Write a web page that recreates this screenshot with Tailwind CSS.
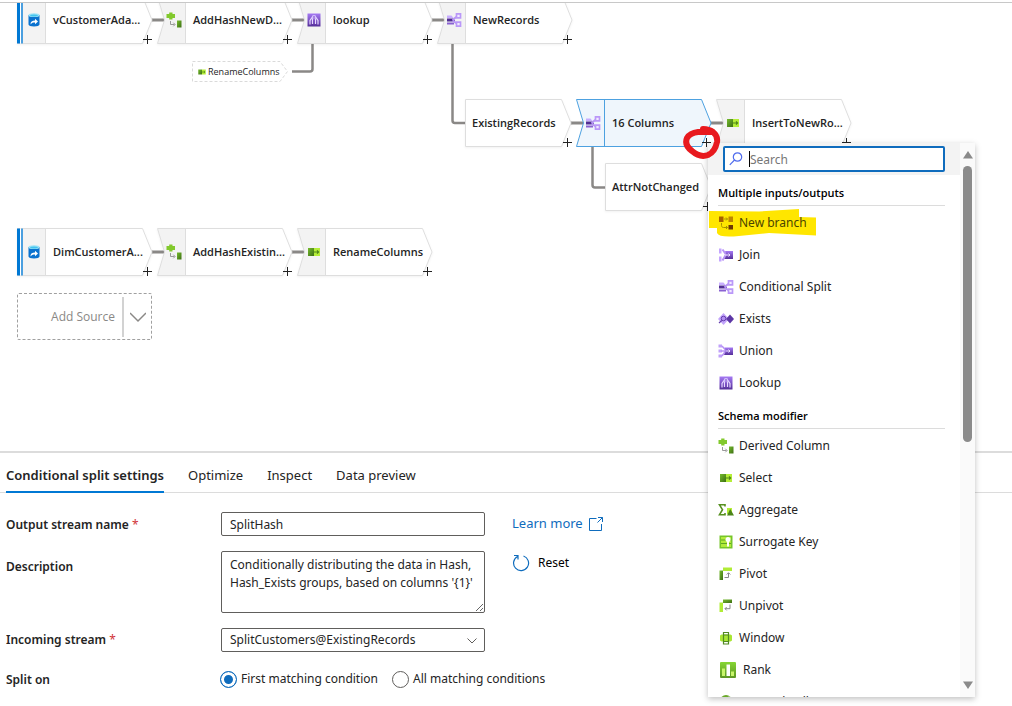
<!DOCTYPE html>
<html lang="en">
<head>
<meta charset="utf-8">
<meta name="viewport" content="width=device-width, initial-scale=1">
<title>Data flow</title>
<script src="https://cdn.jsdelivr.net/npm/@tailwindcss/browser@4"></script>
</head>
<body class="relative flex min-h-screen flex-col bg-white font-['Noto_Sans','Open_Sans',sans-serif] text-xs text-[#242424]">

<!-- Shared shapes and icons -->
<svg class="absolute size-0" aria-hidden="true">
  <defs>
    <linearGradient id="gp" x1="0" y1="0" x2="0" y2="1"><stop offset="0" stop-color="#a67af4"/><stop offset="1" stop-color="#552f99"/></linearGradient>
    <linearGradient id="gg" x1="0" y1="0" x2="1" y2="1"><stop offset="0" stop-color="#76bc2d"/><stop offset="1" stop-color="#3c6e14"/></linearGradient>
    <linearGradient id="gl" x1="0" y1="0" x2="0" y2="1"><stop offset="0" stop-color="#86d633"/><stop offset="1" stop-color="#5e9624"/></linearGradient>
    <symbol id="shape" viewBox="0 0 140 48">
      <path d="M.5 .5H125.500L135 24L125.500 47.500H.5L7.500 24Z" fill="#fff"/>
      <path d="M.5 .5H28.500V47.500H.5L7.500 24Z" fill="#f3f3f3"/>
      <path d="M.5 .5H125.500L135 24L125.500 47.500H.5L7.500 24ZM28.500 .5V47.500" fill="none" stroke="#dedede"/>
    </symbol>
    <symbol id="shape-source" viewBox="0 0 140 48">
      <path d="M.5 .5H125.500L135 24L125.500 47.500H.5Z" fill="#fff"/>
      <path d="M.5 .5H28.500V47.500H.5Z" fill="#f3f3f3"/>
      <path d="M.5 .5H125.500L135 24L125.500 47.500H.5M28.500 .5V47.500" fill="none" stroke="#dedede"/>
      <path d="M0 .5H3V47.500H0Z" fill="#0078d4"/><path d="M3 .5H4V47.500H3Z" fill="#fff"/><path d="M4 .5H6V47.500H4Z" fill="#4a9fe0"/>
    </symbol>
    <symbol id="shape-branch" viewBox="0 0 112 48">
      <path d="M.5 .5H96.500L106 24L96.500 47.500H.5Z" fill="#fff" stroke="#dedede"/>
    </symbol>
    <symbol id="shape-active" viewBox="0 0 140 48">
      <path d="M.5 .5H125.500L135 24L125.500 47.500H.5L7.500 24ZM28.500 .5V47.500" fill="#eff6fc" stroke="#4da1e0"/>
    </symbol>

    <symbol id="i-source" viewBox="0 0 16 16">
      <path d="M2.500 3v9.500c0 1.200 2.400 2 5.500 2s5.500-.8 5.500-2V3z" fill="#0a72cf"/>
      <ellipse cx="8" cy="3.200" rx="5.500" ry="1.900" fill="#9be3f7"/><ellipse cx="8" cy="3.400" rx="3.800" ry="1" fill="#45c4ee"/>
      <path d="M4.500 12.500C4.500 9.500 6 8.500 9 8.500V6.800l3 2.700-3 2.800v-1.700c-2 0-3.200.3-4.500 1.900z" fill="#fff"/>
    </symbol>
    <symbol id="i-derived" viewBox="0 0 16 16">
      <path d="M3.200 0.500h3.300v1.500h2.500v4H6.500v1.500H3.200V6H.5V2h2.700z" fill="#82c92d"/>
      <path d="M11 8.500H15.500v7h-4.500z" fill="url(#gg)"/>
      <path d="M4.500 9v3.500h4M7.300 10.700l1.800 1.800-1.800 1.800" fill="none" stroke="#999"/>
    </symbol>
    <symbol id="i-select" viewBox="0 0 16 16">
      <path d="M2 4h6v8H2z" fill="url(#gg)"/><path d="M8 4h6v8H8z" fill="#b5ee38"/>
      <path d="M7.500 8h5M11 6.300l1.700 1.700-1.700 1.700" fill="none" stroke="#4d8419" stroke-width="1.100"/>
    </symbol>
    <symbol id="i-lookup" viewBox="0 0 16 16">
      <path d="M1.500 1.500h13v13h-13z" fill="url(#gp)"/>
      <path d="M4 12.500V8.500L6 5.500M12 12.500V8.500L10 5.500M6.500 12v-5M9.500 12v-5" fill="none" stroke="#e6d8ff" stroke-width="1.200"/>
      <circle cx="8" cy="5.300" r="2.300" fill="#d7c3ff"/><path d="M8 4v7" stroke="#7848c4"/>
    </symbol>
    <symbol id="i-split" viewBox="0 0 16 16">
      <path d="M1 3.500h4.500L7.500 6H1z" fill="#c8adff"/>
      <path d="M1 6.500h6.500L9 8.500 7.500 9.500H1z" fill="#512e94"/>
      <path d="M1 10.500h7v2H1z" fill="#8a62d2"/>
      <path d="M6.500 8L11.500 4M6.500 8.500l5 3.500" stroke="#b694f4" stroke-width="2"/>
      <path d="M10.500 1.800h4v4h-4zM10.500 10.200h4v4h-4z" fill="#f2ebff" stroke="#ba98f8" stroke-width="1.700"/>
    </symbol>
    <symbol id="i-join" viewBox="0 0 16 16">
      <path d="M1 1.500h2.500v5H1zM1 9.500h2.500v5H1z" fill="#c4a5ff"/>
      <path d="M4.500 2.500L8 7.500 4.500 13.500" fill="none" stroke="#b894f5" stroke-width="2"/>
      <path d="M7 4h8v8H6.500l2-4z" fill="url(#gp)"/><path d="M7 8h5M10.500 6.500L12 8l-1.500 1.500" fill="none" stroke="#eee5ff"/>
    </symbol>
    <symbol id="i-union" viewBox="0 0 16 16">
      <path d="M.5 1.500h3.500v3H.5zM.5 6.500h3.500v3H.5zM.5 11.500h3.500v3H.5z" fill="#c0a0fa"/>
      <path d="M4 3l4 4.500L4 13M3 8h5" fill="none" stroke="#b792f5" stroke-width="1.500"/>
      <path d="M6.500 4.500H15v7.500H6l2-4z" fill="url(#gp)"/><path d="M8 8h4M10.500 6.500L12 8l-1.500 1.500" fill="none" stroke="#eee5ff"/>
    </symbol>
    <symbol id="i-exists" viewBox="0 0 16 16">
      <path d="M5.500 2L11 8l-5.500 6L0 8z" fill="#c3a5fb"/><circle cx="5.500" cy="7.500" r="2.300" fill="#b18df1" stroke="#6540ad"/><path d="M3.800 9.500L1 12" stroke="#6540ad" stroke-width="1.200"/>
      <path d="M12 3.500l4 4.500-4 4.500L8 8z" fill="#5c36a5"/>
    </symbol>
    <symbol id="i-branch" viewBox="0 0 16 16">
      <path d="M1 1.500h4.500V7H1z" fill="#a65f00"/><path d="M10.500 1.500H15V7h-4.500z" fill="#bd8600"/><path d="M10.500 10H15v4.500h-4.500z" fill="#6d3805"/>
      <path d="M6 4h3.500M8 2.500L9.500 4 8 5.500M3.500 8v2.500c0 1.200.7 2 2 2h4M8 11l1.500 1.500L8 14" fill="none" stroke="#a89200"/>
    </symbol>
    <symbol id="i-aggregate" viewBox="0 0 16 16">
      <path d="M7 4.500V2.800H1.500L4.500 7.700 1.500 12.700H7V11" fill="none" stroke="#579020" stroke-width="1.600"/>
      <path d="M9 6h5v6H9z" fill="#b5ee38"/><path d="M12.200 7L16 13.500H9z" fill="#4c8518"/>
    </symbol>
    <symbol id="i-key" viewBox="0 0 16 16">
      <path d="M1.500 1.500h13v13h-13z" fill="#76c52b"/><path d="M3 3h10v10H3z" fill="#b1eb3b"/>
      <path d="M3 6h10M3 9.500h10" stroke="#62a526"/><circle cx="10" cy="5.500" r="2.500" fill="#fff"/><path d="M9 7h2v5.500H9z" fill="#fff"/>
    </symbol>
    <symbol id="i-pivot" viewBox="0 0 16 16">
      <path d="M5 1.500h9V5H5z" fill="#b1ec36"/><path d="M1.500 4.500H5v9.500H1.500z" fill="url(#gg)"/>
      <path d="M6.500 11.500h4V7M8.700 8.500L10.500 6.700l1.800 1.800" fill="none" stroke="#888"/>
    </symbol>
    <symbol id="i-unpivot" viewBox="0 0 16 16">
      <path d="M5 1.500h9V5H5z" fill="url(#gg)"/><path d="M1.500 4.500H5v9.500H1.500z" fill="#b1ec36"/>
      <path d="M12 6.500v4.200H7M8.700 9L7 10.700l1.700 1.700" fill="none" stroke="#888"/>
    </symbol>
    <symbol id="i-window" viewBox="0 0 16 16">
      <path d="M2 5.500L3.500 4.500h9L14 5.500v5l-1.500 1h-9L2 10.500z" fill="#a9e633"/>
      <path d="M5.500 2.500h5v11.500h-5zM5.500 5h5M5.500 11.500h5" fill="none" stroke="#528a20" stroke-width="1.200"/>
    </symbol>
    <symbol id="i-rank" viewBox="0 0 16 16">
      <rect width="16" height="16" rx="1" fill="url(#gl)"/>
      <path d="M2 6.500h3V14H2zM11 9.500h3V14h-3z" fill="#c8f56b"/><path d="M6.500 2.500h3.500V14H6.500z" fill="#fff"/>
    </symbol>
    <symbol id="i-call" viewBox="0 0 16 16">
      <circle cx="8" cy="7" r="6" fill="#6aa92a"/><path d="M6 4.500L8 6l3-3.500" fill="none" stroke="#fff"/>
    </symbol>
  </defs>
</svg>

<div class="h-0.5"></div>

<!-- Data flow canvas -->
<main class="relative h-[449px] overflow-hidden border-t border-[#c8c8c8] font-['Open_Sans','Noto_Sans',sans-serif] text-[11px] leading-4 font-semibold">
  <svg class="absolute left-0 top-0 h-[448px] w-[1012px]" fill="none" stroke="#8a8886" stroke-width="3" aria-hidden="true">
    <path d="M152 17h13M292 17h13M432 17h13M571 120h13M711 120h14M152 249h13M292 249h13"/>
    <path d="M292 68.500h18q2.500 0 2.500-2.500V41M452.500 41v76.500q0 2.500 2.500 2.500h10M592.500 144v38q0 2.500 2.500 2.500h10" stroke-width="2.500"/>
  </svg>

  <div class="absolute left-[17px] top-[-7px] flex h-12 w-[140px] items-center">
    <svg class="absolute inset-0 size-full drop-shadow-xs"><use href="#shape-source"/></svg>
    <svg class="relative ml-[9px] size-4"><use href="#i-source"/></svg>
    <span class="relative ml-[11px]">vCustomerAda...</span>
    <button aria-label="Add step" class="absolute left-[126px] top-[39px] size-[9px]"><svg class="size-full" stroke="#222"><path d="M4.500 0v9M0 4.500h9"/></svg></button>
  </div>
  <div class="absolute left-[157px] top-[-7px] flex h-12 w-[140px] items-center">
    <svg class="absolute inset-0 size-full drop-shadow-xs"><use href="#shape"/></svg>
    <svg class="relative ml-[9px] size-4"><use href="#i-derived"/></svg>
    <span class="relative ml-[11px]">AddHashNewD...</span>
    <button aria-label="Add step" class="absolute left-[126px] top-[39px] size-[9px]"><svg class="size-full" stroke="#222"><path d="M4.500 0v9M0 4.500h9"/></svg></button>
  </div>
  <div class="absolute left-[297px] top-[-7px] flex h-12 w-[140px] items-center">
    <svg class="absolute inset-0 size-full drop-shadow-xs"><use href="#shape"/></svg>
    <svg class="relative ml-[9px] size-4"><use href="#i-lookup"/></svg>
    <span class="relative ml-[11px]">lookup</span>
    <button aria-label="Add step" class="absolute left-[126px] top-[39px] size-[9px]"><svg class="size-full" stroke="#222"><path d="M4.500 0v9M0 4.500h9"/></svg></button>
  </div>
  <div class="absolute left-[437px] top-[-7px] flex h-12 w-[140px] items-center">
    <svg class="absolute inset-0 size-full drop-shadow-xs"><use href="#shape"/></svg>
    <svg class="relative ml-[9px] size-4"><use href="#i-split"/></svg>
    <span class="relative ml-[11px]">NewRecords</span>
    <button aria-label="Add step" class="absolute left-[126px] top-[39px] size-[9px]"><svg class="size-full" stroke="#222"><path d="M4.500 0v9M0 4.500h9"/></svg></button>
  </div>

  <div class="absolute left-[192px] top-[58px] flex h-[21px] w-24 items-center">
    <svg class="absolute inset-0 size-full" fill="none" stroke="#dadada" stroke-dasharray="3 2"><path d="M.5 .5H88L95.500 10.500L88 20.500H.5Z"/></svg>
    <svg class="ml-[5px] size-2.5"><use href="#i-select"/></svg>
    <span class="ml-px text-[9px] leading-3 font-medium">RenameColumns</span>
  </div>

  <div class="absolute left-[465px] top-24 flex h-12 w-28 items-center">
    <svg class="absolute inset-0 size-full drop-shadow-xs"><use href="#shape-branch"/></svg>
    <span class="relative ml-[7px]">ExistingRecords</span>
    <button aria-label="Add step" class="absolute left-[98px] top-[39px] size-[9px]"><svg class="size-full" stroke="#222"><path d="M4.500 0v9M0 4.500h9"/></svg></button>
  </div>
  <div class="absolute left-[576px] top-24 flex h-12 w-[140px] items-center">
    <svg class="absolute inset-0 size-full"><use href="#shape-active"/></svg>
    <svg class="relative ml-[9px] size-4"><use href="#i-split"/></svg>
    <span class="relative ml-[11px]">16 Columns</span>
    <button aria-label="Add step" class="absolute left-[126px] top-[39px] size-[9px]"><svg class="size-full" stroke="#222"><path d="M4.500 0v9M0 4.500h9"/></svg></button>
  </div>
  <div class="absolute left-[716px] top-24 flex h-12 w-[140px] items-center">
    <svg class="absolute inset-0 size-full drop-shadow-xs"><use href="#shape"/></svg>
    <svg class="relative ml-[9px] size-4"><use href="#i-select"/></svg>
    <span class="relative ml-[11px]">InsertToNewRo...</span>
    <button aria-label="Add step" class="absolute left-[126px] top-[39px] size-[9px]"><svg class="size-full" stroke="#222"><path d="M4.500 0v9M0 4.500h9"/></svg></button>
  </div>
  <div class="absolute left-[605px] top-40 flex h-12 w-28 items-center">
    <svg class="absolute inset-0 size-full drop-shadow-xs"><use href="#shape-branch"/></svg>
    <span class="relative ml-[7px]">AttrNotChanged</span>
    <button aria-label="Add step" class="absolute left-[98px] top-[39px] size-[9px]"><svg class="size-full" stroke="#222"><path d="M4.500 0v9M0 4.500h9"/></svg></button>
  </div>

  <div class="absolute left-[17px] top-[225px] flex h-12 w-[140px] items-center">
    <svg class="absolute inset-0 size-full drop-shadow-xs"><use href="#shape-source"/></svg>
    <svg class="relative ml-[9px] size-4"><use href="#i-source"/></svg>
    <span class="relative ml-[11px]">DimCustomerA...</span>
    <button aria-label="Add step" class="absolute left-[126px] top-[39px] size-[9px]"><svg class="size-full" stroke="#222"><path d="M4.500 0v9M0 4.500h9"/></svg></button>
  </div>
  <div class="absolute left-[157px] top-[225px] flex h-12 w-[140px] items-center">
    <svg class="absolute inset-0 size-full drop-shadow-xs"><use href="#shape"/></svg>
    <svg class="relative ml-[9px] size-4"><use href="#i-derived"/></svg>
    <span class="relative ml-[11px]">AddHashExistin...</span>
    <button aria-label="Add step" class="absolute left-[126px] top-[39px] size-[9px]"><svg class="size-full" stroke="#222"><path d="M4.500 0v9M0 4.500h9"/></svg></button>
  </div>
  <div class="absolute left-[297px] top-[225px] flex h-12 w-[140px] items-center">
    <svg class="absolute inset-0 size-full drop-shadow-xs"><use href="#shape"/></svg>
    <svg class="relative ml-[9px] size-4"><use href="#i-select"/></svg>
    <span class="relative ml-[11px]">RenameColumns</span>
    <button aria-label="Add step" class="absolute left-[126px] top-[39px] size-[9px]"><svg class="size-full" stroke="#222"><path d="M4.500 0v9M0 4.500h9"/></svg></button>
  </div>

  <div class="absolute left-[17px] top-[290px] flex h-[47px] w-[135px] items-center justify-end rounded-xs border border-dashed border-[#a0a0a0] text-xs font-normal text-[#8a8886]">
    <button class="pr-[7px]">Add Source</button>
    <button aria-label="Source options" class="flex h-10 w-[29px] items-center justify-center border-l-2 border-[#d2d2d2]">
      <svg class="size-4" fill="none" stroke="#8a8886" stroke-width="1.500"><path d="M0 4l8 8 8-8"/></svg>
    </button>
  </div>
</main>

<!-- Settings panel -->
<section class="border-t-2 border-[#dcdcdc]">
  <nav role="tablist" class="flex h-10 items-stretch gap-6 border-b border-[#dcdcdc] px-1.5 text-[13px]">
    <button role="tab" aria-selected="true" class="-mb-px border-b-2 border-[#0078d4] pt-2 font-semibold">Conditional split settings</button>
    <button role="tab" class="pt-1.5">Optimize</button>
    <button role="tab" class="pt-1.5">Inspect</button>
    <button role="tab" class="pt-1.5">Data preview</button>
  </nav>
  <form class="grid grid-cols-[215px_291px_1fr] gap-y-[15px] px-1.5 pt-[19px]">
    <label for="name" class="pt-[5px] font-semibold">Output stream name <span class="font-normal text-[#d13438]">*</span></label>
    <input id="name" value="SplitHash" class="h-6 w-[264px] rounded-xs border border-[#605e5c] px-2">
    <a href="#" class="flex items-center gap-1.5 text-[13px] text-[#0f6cbd]">Learn more
      <svg class="size-3.5" fill="none" stroke="#0f6cbd"><path d="M7.500 1.500H.5V13.500H12.500V7M9 .5H13.500V5M13.500 .5L8.500 5.500"/></svg></a>

    <label for="desc" class="pt-2 font-semibold">Description</label>
    <textarea id="desc" class="h-[62px] w-[264px] rounded-xs border border-[#605e5c] px-2 py-1 leading-[18px]">Conditionally distributing the data in Hash, Hash_Exists groups, based on columns '{1}'</textarea>
    <button type="button" class="flex h-6 items-center gap-2 text-black">
      <svg class="size-[18px]" fill="none" stroke="#0f6cbd" stroke-width="1.200"><path d="M5.500 2.500A7.500 7.500 0 1 0 11.500 2M2 1.500H6V5.500"/></svg>Reset</button>

    <label for="stream" class="pt-1 font-semibold">Incoming stream <span class="font-normal text-[#d13438]">*</span></label>
    <div class="relative w-[264px]">
      <select id="stream" class="h-6 w-full appearance-none rounded-xs border border-[#605e5c] px-2"><option>SplitCustomers@ExistingRecords</option></select>
      <svg class="pointer-events-none absolute right-2 top-2 size-2.5" fill="none" stroke="#605e5c"><path d="M.5 2.500L5 7l4.500-4.500"/></svg>
    </div>
    <span></span>

    <span id="split-label" class="pt-[5px] font-semibold">Split on</span>
    <div role="radiogroup" aria-labelledby="split-label" class="col-span-2 -ml-px flex h-6 items-center gap-3.5">
      <label class="flex items-center gap-1"><input type="radio" name="split" checked class="size-[17px] appearance-none rounded-full border border-[#605e5c] checked:border-[#0f6cbd] checked:bg-[#0f6cbd] checked:shadow-[inset_0_0_0_3px_#fff]">First matching condition</label>
      <label class="flex items-center gap-1"><input type="radio" name="split" class="size-[17px] appearance-none rounded-full border border-[#605e5c] checked:border-[#0f6cbd] checked:bg-[#0f6cbd] checked:shadow-[inset_0_0_0_3px_#fff]">All matching conditions</label>
    </div>
  </form>
</section>

<!-- Transformation menu -->
<aside class="absolute left-[708px] top-[143px] flex h-[554px] w-[267px] overflow-hidden bg-white shadow-[0_2px_6px_rgba(0,0,0,0.25)]">
  <div class="min-w-0 flex-1">
    <div class="flex h-8 items-center bg-[#f3f3f3] px-[15px]">
      <label class="flex h-[26px] w-full items-center gap-1.5 rounded-xs border-2 border-[#0f6cbd] bg-white px-1">
        <svg class="size-3.5 shrink-0" fill="none" stroke="#4f6bed" stroke-width="1.200"><circle cx="8.500" cy="5" r="4.200"/><path d="M5.500 8L.8 12.800"/></svg>
        <span class="h-4 w-px bg-black"></span>
        <input type="search" aria-label="Search" placeholder="Search" class="-ml-1.5 min-w-0 flex-1 pt-0.5 outline-none placeholder:text-[#767676]">
      </label>
    </div>
    <div class="pl-2.5 pr-[15px]">
      <h2 class="h-[31px] border-b border-[#dcdcdc] pt-2.5 font-['Open_Sans','Noto_Sans',sans-serif] text-[11px] leading-4 font-semibold text-black">Multiple inputs/outputs</h2>
      <ul>
        <li class="relative">
          <svg class="absolute -left-[9px] top-0 h-8 w-[108px]"><path d="M0 5L50 5.500L90 3V11L107 11.500V29.500L60 27L30 30Q10 32 8 27V22H0Z" fill="#ffe600"/></svg>
          <button class="relative flex h-8 items-center gap-[5px] pt-px text-[#4a4400]"><svg class="size-4"><use href="#i-branch"/></svg>New branch</button></li>
        <li><button class="flex h-8 items-center gap-[5px] pt-px"><svg class="size-4"><use href="#i-join"/></svg>Join</button></li>
        <li><button class="flex h-8 items-center gap-[5px] pt-px"><svg class="size-4"><use href="#i-split"/></svg>Conditional Split</button></li>
        <li><button class="flex h-8 items-center gap-[5px] pt-px"><svg class="size-4"><use href="#i-exists"/></svg>Exists</button></li>
        <li><button class="flex h-8 items-center gap-[5px] pt-px"><svg class="size-4"><use href="#i-union"/></svg>Union</button></li>
        <li><button class="flex h-8 items-center gap-[5px] pt-px"><svg class="size-4"><use href="#i-lookup"/></svg>Lookup</button></li>
      </ul>
      <h2 class="h-[31px] border-b border-[#dcdcdc] pt-2.5 font-['Open_Sans','Noto_Sans',sans-serif] text-[11px] leading-4 font-semibold text-black">Schema modifier</h2>
      <ul>
        <li><button class="flex h-8 items-center gap-[5px] pt-px"><svg class="size-4"><use href="#i-derived"/></svg>Derived Column</button></li>
        <li><button class="flex h-8 items-center gap-[5px] pt-px"><svg class="size-4"><use href="#i-select"/></svg>Select</button></li>
        <li><button class="flex h-8 items-center gap-[5px] pt-px"><svg class="size-4"><use href="#i-aggregate"/></svg>Aggregate</button></li>
        <li><button class="flex h-8 items-center gap-[5px] pt-px"><svg class="size-4"><use href="#i-key"/></svg>Surrogate Key</button></li>
        <li><button class="flex h-8 items-center gap-[5px] pt-px"><svg class="size-4"><use href="#i-pivot"/></svg>Pivot</button></li>
        <li><button class="flex h-8 items-center gap-[5px] pt-px"><svg class="size-4"><use href="#i-unpivot"/></svg>Unpivot</button></li>
        <li><button class="flex h-8 items-center gap-[5px] pt-px"><svg class="size-4"><use href="#i-window"/></svg>Window</button></li>
        <li><button class="flex h-8 items-center gap-[7px] pl-0.5 pt-px"><svg class="size-4"><use href="#i-rank"/></svg>Rank</button></li>
        <li><button class="flex h-8 items-center gap-[5px] pt-px"><svg class="size-4"><use href="#i-call"/></svg>External Call</button></li>
      </ul>
    </div>
  </div>
  <div class="flex w-[15px] flex-col items-center bg-[#fafafa] pt-2 pb-2">
    <svg class="h-2 w-2.5" fill="#8a8a8a"><path d="M5 0L10 7.500H0Z"/></svg>
    <div class="mt-[7px] h-[276px] w-[9px] rounded-full bg-[#8b8b8b]"></div>
    <svg class="mt-auto h-2 w-2.5" fill="#8a8a8a"><path d="M0 .5H10L5 8Z"/></svg>
  </div>
</aside>

<!-- Hand-drawn marker around the add button -->
<svg class="pointer-events-none absolute left-[681px] top-[124px] h-9 w-10" fill="none" stroke="#e8191e" stroke-width="6" stroke-linecap="round" stroke-linejoin="round" aria-hidden="true"><path d="M22 5Q28 5 32 8Q37 12 36 18Q34 28 27 31Q19 34 11 27Q3 21 6 14Q9 9 17 8L30 8"/></svg>
</body>
</html>
